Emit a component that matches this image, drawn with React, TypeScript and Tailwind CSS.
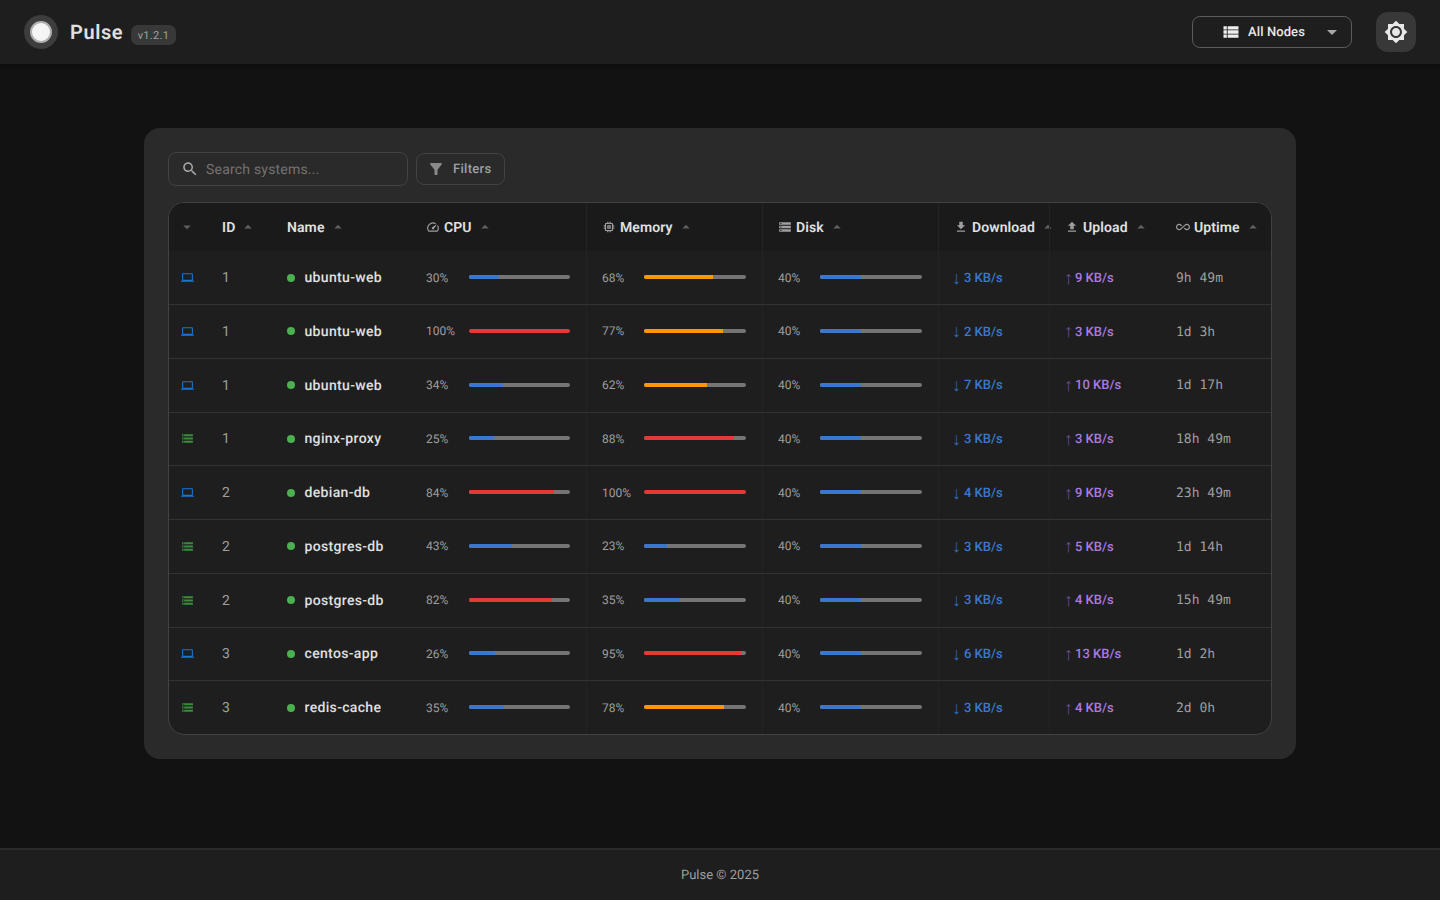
import React from 'react';

type Row = {
  type: 'vm' | 'ct';
  id: number;
  name: string;
  cpu: number;
  mem: number;
  down: number;
  up: number;
  uptime: string;
};

const rows: Row[] = [
  { type: 'vm', id: 1, name: 'ubuntu-web', cpu: 30, mem: 68, down: 3, up: 9, uptime: '9h 49m' },
  { type: 'vm', id: 1, name: 'ubuntu-web', cpu: 100, mem: 77, down: 2, up: 3, uptime: '1d 3h' },
  { type: 'vm', id: 1, name: 'ubuntu-web', cpu: 34, mem: 62, down: 7, up: 10, uptime: '1d 17h' },
  { type: 'ct', id: 1, name: 'nginx-proxy', cpu: 25, mem: 88, down: 3, up: 3, uptime: '18h 49m' },
  { type: 'vm', id: 2, name: 'debian-db', cpu: 84, mem: 100, down: 4, up: 9, uptime: '23h 49m' },
  { type: 'ct', id: 2, name: 'postgres-db', cpu: 43, mem: 23, down: 3, up: 5, uptime: '1d 14h' },
  { type: 'ct', id: 2, name: 'postgres-db', cpu: 82, mem: 35, down: 3, up: 4, uptime: '15h 49m' },
  { type: 'vm', id: 3, name: 'centos-app', cpu: 26, mem: 95, down: 6, up: 13, uptime: '1d 2h' },
  { type: 'ct', id: 3, name: 'redis-cache', cpu: 35, mem: 78, down: 3, up: 4, uptime: '2d 0h' },
];

const paths = {
  list: 'M3 14h4v-4H3v4zm0 5h4v-4H3v4zM3 9h4V5H3v4zm5 5h13v-4H8v4zm0 5h13v-4H8v4zM8 5v4h13V5H8z',
  sun: 'M20 8.69V4h-4.69L12 .69 8.69 4H4v4.69L.69 12 4 15.31V20h4.69L12 23.31 15.31 20H20v-4.69L23.31 12 20 8.69zM12 18c-3.31 0-6-2.69-6-6s2.69-6 6-6 6 2.69 6 6-2.69 6-6 6zm0-10c-2.21 0-4 1.79-4 4s1.79 4 4 4 4-1.79 4-4-1.79-4-4-4z',
  search: 'M15.5 14h-.79l-.28-.27C15.41 12.59 16 11.11 16 9.5 16 5.91 13.09 3 9.5 3S3 5.91 3 9.5 5.91 16 9.5 16c1.61 0 3.09-.59 4.23-1.57l.27.28v.79l5 4.99L20.49 19l-4.99-5zm-6 0C7.01 14 5 11.99 5 9.5S7.01 5 9.5 5 14 7.01 14 9.5 11.99 14 9.5 14z',
  filter: 'M4.25 5.61C6.27 8.2 10 13 10 13v6c0 .55.45 1 1 1h2c.55 0 1-.45 1-1v-6s3.72-4.8 5.74-7.39c.51-.66.04-1.61-.79-1.61H5.04c-.83 0-1.3.95-.79 1.61z',
  dropDown: 'M7 10l5 5 5-5z',
  dropUp: 'M7 14l5-5 5 5z',
  laptop: 'M20 18c1.1 0 1.99-.9 1.99-2L22 6c0-1.1-.9-2-2-2H4c-1.1 0-2 .9-2 2v10c0 1.1.9 2 2 2H0v2h24v-2h-4zM4 6h16v10H4V6z',
  storage: 'M2 20h20v-4H2v4zm2-3h2v2H4v-2zM2 4v4h20V4H2zm4 3H4V5h2v2zm-4 7h20v-4H2v4zm2-3h2v2H4v-2z',
  speed: 'M20.38 8.57l-1.23 1.85a8 8 0 0 1-.22 7.58H5.07A8 8 0 0 1 15.58 6.85l1.85-1.23A10 10 0 0 0 3.35 19a2 2 0 0 0 1.72 1h13.85a2 2 0 0 0 1.74-1 10 10 0 0 0-.27-10.44zm-9.79 6.84a2 2 0 0 0 2.83 0l5.66-8.49-8.49 5.66a2 2 0 0 0 0 2.83z',
  memory: 'M15 9H9v6h6V9zm-2 4h-2v-2h2v2zm8-2V9h-2V7c0-1.1-.9-2-2-2h-2V3h-2v2h-2V3H9v2H7c-1.1 0-2 .9-2 2v2H3v2h2v2H3v2h2v2c0 1.1.9 2 2 2h2v2h2v-2h2v2h2v-2h2c1.1 0 2-.9 2-2v-2h2v-2h-2v-2h2zm-4 6H7V7h10v10z',
  download: 'M19 9h-4V3H9v6H5l7 7 7-7zM5 18v2h14v-2H5z',
  upload: 'M9 16h6v-6h4l-7-7-7 7h4v6zm-4 2h14v2H5v-2z',
  infinity: 'M18.6 6.62c-1.44 0-2.8.56-3.77 1.53L12 10.66 10.48 12h.01L7.8 14.39c-.64.64-1.49.99-2.4.99-1.87 0-3.39-1.51-3.39-3.38S3.53 8.62 5.4 8.62c.91 0 1.76.35 2.44 1.03l1.13 1 1.51-1.34L9.22 8.2C8.2 7.18 6.84 6.62 5.4 6.62 2.42 6.62 0 9.04 0 12s2.42 5.38 5.4 5.38c1.44 0 2.8-.56 3.77-1.53l2.83-2.5.01.01L13.52 12h-.01l2.69-2.39c.64-.64 1.49-.99 2.4-.99 1.87 0 3.39 1.51 3.39 3.38s-1.52 3.38-3.39 3.38c-.9 0-1.76-.35-2.44-1.03l-1.14-1.01-1.51 1.34 1.27 1.12c1.02 1.01 2.37 1.57 3.82 1.57 2.98 0 5.4-2.41 5.4-5.38s-2.42-5.37-5.4-5.37z',
};

function Icon({ d, className }: { d: string; className: string }) {
  return (
    <svg viewBox="0 0 24 24" fill="currentColor" className={className}>
      <path d={d} />
    </svg>
  );
}

const gridCols =
  'grid grid-cols-[37px_65px_139px_176px_176px_176px_111px_111px_111px] items-center';

function SortArrow() {
  return <Icon d={paths.dropUp} className="w-[18px] h-[18px] ml-[4px] text-[#5f5f5f] shrink-0" />;
}

function HeadCell({ label, icon, border }: { label: string; icon?: string; border?: boolean }) {
  return (
    <div className={`h-full flex items-center text-[14px] font-semibold tracking-[0.1px] text-[#e0e0e0] ${border ? 'pl-[15px] border-l border-[#232323]' : 'pl-4'}`}>
      {icon && <Icon d={icon} className="w-[14px] h-[14px] mr-[4px] text-[#9e9e9e] shrink-0" />}
      <span className="pt-[2px]">{label}</span>
      <SortArrow />
    </div>
  );
}

function Meter({ value, tone, border }: { value: number; tone: 'cpu' | 'mem' | 'disk'; border?: boolean }) {
  let color = 'bg-[#3a78d0]';
  if (tone !== 'disk') {
    if (value >= 80 && tone === 'cpu') color = 'bg-[#e53935]';
    else if (value >= 85 && tone === 'mem') color = 'bg-[#e53935]';
    else if (value >= 60 && tone === 'mem') color = 'bg-[#ff9800]';
  }
  return (
    <div className={`h-full pr-4 flex items-center ${border ? 'pl-[15px] border-l border-[#232323]' : 'pl-4'}`}>
      <span className={`shrink-0 text-[12px] text-[#9e9e9e] ${border ? 'w-[42px]' : 'w-[43px]'}`}>{value}%</span>
      <div className="flex-1 h-[4px] mb-[1px] rounded-full bg-[#757575] overflow-hidden">
        <div className={`h-full ${color}`} style={{ width: `${value}%` }} />
      </div>
    </div>
  );
}

export default function App() {
  return (
    <div className="h-screen flex flex-col bg-[#121212] font-['Roboto',sans-serif] [text-rendering:geometricPrecision]">
      {/* Header */}
      <header className="h-16 shrink-0 bg-[#1e1e1e] px-6 flex items-center justify-between shadow-[0_2px_4px_rgba(0,0,0,0.3)]">
        <div className="flex items-center">
          <div className="w-[34px] h-[34px] rounded-full bg-[#3d3d3d] flex items-center justify-center">
            <div className="w-[22px] h-[22px] rounded-full bg-[#f5f5f5] border-2 border-[#b0b0b0]" />
          </div>
          <span className="ml-3 text-[20px] font-semibold tracking-[0.6px] text-[#e0e0e0]">Pulse</span>
          <span className="ml-2 mt-[6px] h-5 px-[6.5px] pt-px rounded-[7px] bg-[#383838] text-[11px] leading-5 tracking-[0.3px] text-[#a0a0a0]">v1.2.1</span>
        </div>
        <div className="flex items-center gap-6">
          <div className="w-40 h-8 rounded-lg border border-[#5c5c5c] flex items-center pl-[28px] pr-[7px]">
            <Icon d={paths.list} className="w-5 h-5 text-[#eeeeee]" />
            <span className="ml-[7px] pt-[2px] text-[13px] font-medium tracking-[0.1px] text-[#e8e8e8]">All Nodes</span>
            <Icon d={paths.dropDown} className="ml-auto w-6 h-6 text-[#a8a8a8]" />
          </div>
          <div className="w-10 h-10 rounded-xl bg-[#383838] flex items-center justify-center">
            <Icon d={paths.sun} className="w-6 h-6 text-[#e8e8e8]" />
          </div>
        </div>
      </header>

      {/* Content */}
      <main className="flex-1 pt-16 flex justify-center">
        <div className="w-[1152px] h-fit rounded-2xl bg-[#2a2a2a] p-6">
          <div className="flex items-center gap-2 mb-4">
            <div className="w-60 h-[34px] rounded-lg border border-[#424242] flex items-center pl-[12px]">
              <Icon d={paths.search} className="w-[18px] h-[18px] text-[#a8a8a8]" />
              <span className="ml-[7px] pt-[2px] text-[14px] tracking-[0.2px] text-[#727272]">Search systems...</span>
            </div>
            <div className="w-[89px] h-8 rounded-lg border border-[#424242] flex items-center pl-[10px]">
              <Icon d={paths.filter} className="w-[18px] h-[18px] text-[#8a8a8a]" />
              <span className="ml-[8px] pt-[2px] text-[13px] font-medium tracking-[0.3px] text-[#a0a0a0]">Filters</span>
            </div>
          </div>

          <div className="rounded-2xl border border-[#424242] bg-[#1e1e1e] overflow-hidden">
            <div className={`${gridCols} h-[48.25px] bg-[#1a1a1a]`}>
              <div className="pl-[9px]">
                <Icon d={paths.dropDown} className="w-[18px] h-[18px] text-[#5f5f5f]" />
              </div>
              <HeadCell label="ID" />
              <HeadCell label="Name" />
              <HeadCell label="CPU" icon={paths.speed} />
              <HeadCell label="Memory" icon={paths.memory} border />
              <HeadCell label="Disk" icon={paths.storage} border />
              <HeadCell label="Download" icon={paths.download} border />
              <HeadCell label="Upload" icon={paths.upload} border />
              <HeadCell label="Uptime" icon={paths.infinity} />
            </div>
            {rows.map((row, i) => (
              <div key={i} className={`${gridCols} ${i < rows.length - 1 ? 'h-[53.75px] border-b border-[#333333]' : 'h-[53px]'}`}>
                <div className="pl-3">
                  {row.type === 'vm' ? (
                    <Icon d={paths.laptop} className="w-[13px] h-[13px] text-[#1976d2]" />
                  ) : (
                    <Icon d={paths.storage} className="w-[13px] h-[13px] text-[#388e3c]" />
                  )}
                </div>
                <div className="pl-4 pt-[2px] text-[14px] text-[#9e9e9e]">{row.id}</div>
                <div className="pl-4 flex items-center">
                  <span className="w-2 h-2 rounded-full bg-[#4caf50] mr-[9.5px]" />
                  <span className="pt-[2px] text-[14px] font-medium tracking-[0.33px] text-[#e0e0e0]">{row.name}</span>
                </div>
                <Meter value={row.cpu} tone="cpu" />
                <Meter value={row.mem} tone="mem" border />
                <Meter value={40} tone="disk" border />
                <div className="h-full pl-[13px] flex items-center border-l border-[#232323] text-[13px] font-medium text-[#3a78d0]">
                  <span className="mr-[3px] pt-[2px] text-[18px] leading-none text-[#2f64ad]">↓</span>
                  <span className="pt-[2px]">{row.down} KB/s</span>
                </div>
                <div className="h-full pl-[14px] flex items-center border-l border-[#232323] text-[13px] font-medium text-[#ab7ae0]">
                  <span className="mr-[2px] pt-[2px] text-[18px] leading-none text-[#6a4f94]">↑</span>
                  <span className="pt-[2px]">{row.up} KB/s</span>
                </div>
                <div className="pl-4 pt-[2px] font-['DejaVu_Sans_Mono',monospace] text-[13px] text-[#9e9e9e]">{row.uptime}</div>
              </div>
            ))}
          </div>
        </div>
      </main>

      {/* Footer */}
      <footer className="h-[52px] shrink-0 border-t-2 border-[#2a2a2a] bg-[#1e1e1e] flex items-center justify-center text-[13px] text-[#9e9e9e]">
        <span className="pt-px">Pulse © 2025</span>
      </footer>
    </div>
  );
}
